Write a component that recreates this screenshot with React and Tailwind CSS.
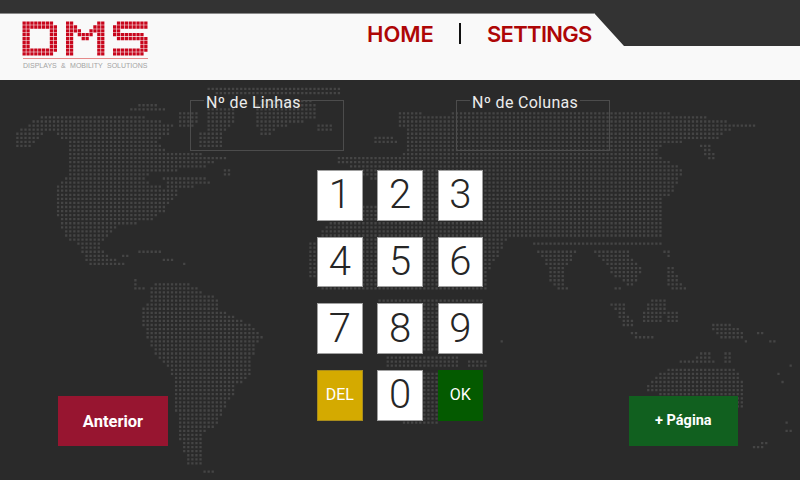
import React from "react";

const PITCH = 4.07;
const OX = 1.09;
const OY = 3.49;
const SIZE = 2.3;

// Each shape is a list of [y, left, right]; edges are interpolated between rows.
const SHAPES = [
  // North America
  [[117,40,143],[125,27,173],[133,55,170],[142,67,157],[150,67,167],[157,70,230],[167,68,203],[175,67,143],[183,60,150],[192,55,180],[203,55,168],[212,55,163],[220,62,150],[228,62,113],[237,67,107],[245,78,100],[253,83,103],[262,87,123],[267,95,123]],
  [[175,160,203],[183,167,210],[190,170,182]],
  // Alaska
  [[125,27,60],[133,18,45],[142,15,33],[150,13,28]],
  // Arctic, Greenland, Baffin
  [[88,208,340],[94,215,340]],
  [[98,262,310],[102,262,310]],
  [[105,257,317],[118,257,317],[128,258,277],[137,262,268]],
  [[125,317,331],[131,317,331]],
  [[107,207,233],[123,207,233],[130,207,227],[133,200,224],[148,200,224]],
  [[110,180,200],[127,180,195]],
  [[104,140,153],[109,130,165],[113,132,165]],
  // Scandinavia + UK
  [[110,400,423],[128,400,423]],
  [[135,373,393],[143,373,397]],
  // Eurasia + Africa upper part
  [[113,458,667],[118,393,710],[122,405,730],[127,405,737],[133,405,725],[138,405,718],[142,405,683],[147,405,657],[150,405,657],[155,400,657],[158,337,662],[165,337,677],[168,363,682],[177,363,680],[180,378,678],[197,378,670],[200,378,657],[203,378,660],[205,363,660],[220,345,662],[223,328,662],[235,320,662],[236,320,662],[238,318,507],[243,310,505],[258,310,498],[265,310,490],[277,310,488],[280,315,487],[290,322,487]],
  [[293,322,487],[295,322,487]],
  // Africa lower part
  [[298,378,483],[352,378,483]],
  [[355,385,460],[367,385,460]],
  [[358,468,487],[367,468,487]],
  [[370,378,437],[415,378,437],[425,410,437]],
  // Far east tail
  [[127,737,757]],
  [[142,700,712],[150,702,712],[160,708,714]],
  // South Asia
  [[240,530,670],[244,533,660]],
  [[248,533,576],[258,543,573],[270,548,563],[280,550,563],[290,557,570]],
  [[248,593,630],[258,600,630],[268,610,640],[275,613,640],[285,627,635]],
  [[285,613,617],[292,617,623]],
  [[248,663,670],[258,668,672]],
  [[268,668,675],[278,668,677],[285,665,685],[292,680,685]],
  // Indonesia
  [[303,608,627],[312,617,625],[320,620,633],[327,625,633]],
  [[333,630,635],[336,632,650],[340,643,657]],
  [[298,652,665],[304,648,665],[312,643,665],[323,643,662]],
  [[312,668,677],[323,668,677]],
  [[323,715,727],[327,708,733],[332,715,743],[335,720,743],[340,720,742]],
  [[332,752,760],[335,760,765]],
  [[340,745,750],[343,743,748]],
  [[340,768,773],[343,772,777]],
  // Australia
  [[352,700,710],[357,697,710],[360,680,713],[365,675,713]],
  [[352,726,730],[357,723,733],[365,723,733]],
  [[368,672,735],[377,655,740],[385,648,745],[393,648,745],[400,700,745],[409,740,743]],
  // New Zealand and islands
  [[421,787,789],[426,787,789]],
  [[430,785,792],[433,780,787]],
  [[438,771,773]],
  [[442,763,768],[446,755,765],[450,752,762]],
  [[364,791,793]],
  [[372,779,781],[377,779,781]],
  [[381,783,785]],
  [[343,501,503]],
  // Caribbean
  [[250,138,157]],
  [[253,155,160]],
  [[258,163,172],[262,163,172]],
  [[262,149,151]],
  [[262,182,184]],
  [[253,123,128],[258,123,128]],
  [[170,223,232],[177,223,232]],
  // Centre America tail
  [[280,132,137],[287,132,137],[290,133,150]],
  // South America
  [[282,158,177],[285,153,192],[290,150,198],[298,150,217],[310,142,220],[318,142,237],[323,142,248],[335,147,263],[347,152,255],[358,158,252],[367,170,252],[380,174,248],[385,174,235],[397,174,232],[407,174,225],[415,178,223],[425,178,215],[433,178,203],[443,182,200],[452,183,203],[458,187,203],[467,190,200]],
  [[473,202,215]],
];

function rowExtent(shape, y) {
  if (shape.length === 1) {
    return Math.abs(shape[0][0] - y) <= PITCH / 2 ? [shape[0][1], shape[0][2]] : null;
  }
  for (let i = 0; i < shape.length - 1; i++) {
    const a = shape[i];
    const b = shape[i + 1];
    if (y >= a[0] && y <= b[0]) {
      const t = (y - a[0]) / (b[0] - a[0] || 1);
      return [a[1] + (b[1] - a[1]) * t, a[2] + (b[2] - a[2]) * t];
    }
  }
  return null;
}

function buildMapPath() {
  const on = new Set();
  for (let r = 0; r < 118; r++) {
    const y = OY + r * PITCH;
    for (const shape of SHAPES) {
      const ext = rowExtent(shape, y);
      if (!ext) continue;
      for (let c = 0; c < 197; c++) {
        const x = OX + c * PITCH;
        if (x >= ext[0] - 0.6 && x <= ext[1] + 0.6) on.add(r * 1000 + c);
      }
    }
  }
  let d = "";
  on.forEach((k) => {
    const r = Math.floor(k / 1000);
    const c = k % 1000;
    const x = OX + c * PITCH - SIZE / 2;
    const y = OY + r * PITCH - SIZE / 2;
    d += `M${x.toFixed(2)} ${y.toFixed(2)}h${SIZE}v${SIZE}h-${SIZE}z`;
  });
  return d;
}

const MAP_PATH = buildMapPath();

const LOGO = {
  D: { x: 22.5, rows: ["########.", "#########", "##.....##", "##.....##", "##.....##", "##.....##", "##.....##", "#########", "########."] },
  M: { x: 66, rows: ["##......##", "###....###", "####..####", "##.####.##", "##..##..##", "##......##", "##......##", "##......##", "##......##"] },
  S: { x: 113, rows: [".########", "#########", "##.......", "########.", ".########", ".......##", ".......##", "#########", "########."] },
};

function logoPath() {
  let d = "";
  Object.values(LOGO).forEach(({ x, rows }) => {
    rows.forEach((row, r) => {
      [...row].forEach((ch, c) => {
        if (ch === "#") {
          d += `M${(x + c * 3.9).toFixed(2)} ${(21.5 + r * 3.85).toFixed(2)}h3.3v3.3h-3.3z`;
        }
      });
    });
  });
  return d;
}

function Logo() {
  return (
    <div className="w-[128px] flex flex-col">
      <svg width="128" height="40" viewBox="22 21 128 40" className="block">
        <path d={logoPath()} fill="#c8061c" />
        <rect x="23" y="58" width="125" height="1" fill="#e58a8a" />
      </svg>
      <span className="block h-[9px] ml-[1px] text-[7px] leading-[9px] whitespace-nowrap text-[#a3a3a3] [word-spacing:2.4px] [font-family:'Liberation_Sans',sans-serif]">
        DISPLAYS &amp; MOBILITY SOLUTIONS
      </span>
    </div>
  );
}

function Field({ label }) {
  return (
    <fieldset className="w-[154px] h-[62px] border border-[#4c4c4c]">
      <legend className="ml-[13px] px-[2px] pt-[4px] text-[16px] leading-[19px] tracking-[0.3px] text-[#ececec]">
        {label}
      </legend>
    </fieldset>
  );
}

function Key({ children }) {
  return (
    <button className="h-[50.5px] flex items-center justify-center bg-white border border-[#a0a0a0] text-[40px] font-light leading-none text-[#262626]">
      {children}
    </button>
  );
}

export default function App() {
  return (
    <div className="relative w-[800px] h-[480px] overflow-hidden flex flex-col bg-[#2a2a2a] [font-family:Roboto,sans-serif]">
      <svg width="800" height="480" viewBox="0 0 800 480" className="absolute inset-0">
        <path d={MAP_PATH} fill="#454545" />
      </svg>

      <div className="relative h-[13px] bg-[#333333]" />
      <div className="relative h-[67px] bg-[#333333]">
        <header className="h-full bg-[#f9f9f9] border-t border-[#8a8a8a] flex items-start pl-[22px] [clip-path:polygon(0_0,594px_0,624px_33px,800px_33px,800px_67px,0_67px)]">
          <div className="pt-[7px]">
            <Logo />
          </div>
          <nav className="ml-[217px] pt-[5px] flex items-center h-[34px] text-[22px] leading-[30px] font-semibold text-[#ae0606] [font-family:Inter,sans-serif]">
            <span className="w-[67px] whitespace-nowrap">HOME</span>
            <span className="w-[2px] h-[21px] ml-[25px] bg-[#111111]" />
            <span className="ml-[26px] w-[105px] whitespace-nowrap tracking-[-0.7px]">SETTINGS</span>
          </nav>
        </header>
      </div>

      <main className="relative flex-1 flex flex-col">
        <div className="flex pl-[190px] gap-[112px] mt-[9px]">
          <Field label="Nº de Linhas" />
          <Field label="Nº de Colunas" />
        </div>

        <div className="flex items-start mt-[19px] ml-[58px]">
          <button className="mt-[226px] w-[110px] h-[50px] pt-[2px] flex items-center justify-center bg-[#971530] text-white text-[16.5px] font-bold">
            Anterior
          </button>
          <div className="ml-[149px] grid grid-cols-[45.5px_45.5px_45.5px] gap-x-[14.8px] gap-y-[16.2px]">
            <Key>1</Key>
            <Key>2</Key>
            <Key>3</Key>
            <Key>4</Key>
            <Key>5</Key>
            <Key>6</Key>
            <Key>7</Key>
            <Key>8</Key>
            <Key>9</Key>
            <button className="h-[50.5px] flex items-center justify-center bg-[#d4aa00] border border-[#a88c1c] text-white text-[16px]">
              DEL
            </button>
            <Key>0</Key>
            <button className="h-[50.5px] flex items-center justify-center bg-[#045a00] text-white text-[16px]">
              OK
            </button>
          </div>
          <button className="mt-[226px] ml-[145.5px] w-[109.5px] h-[50px] flex items-center justify-center bg-[#11601f] text-white text-[14.5px] font-bold">
            + Página
          </button>
        </div>
      </main>
    </div>
  );
}
